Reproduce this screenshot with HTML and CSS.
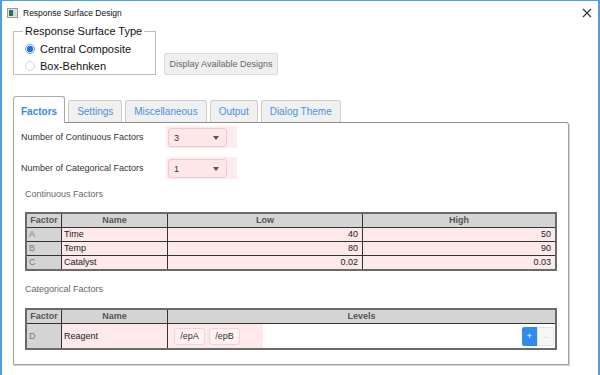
FILE: index.html
```html
<!DOCTYPE html>
<html lang="en">
<head>
    <meta charset="UTF-8">
    <meta name="viewport" content="width=device-width, initial-scale=1.0">
    <title>Response Surface Design</title>
    <link rel="stylesheet" href="styles.css">
</head>
<body>
<div class="window">
    <div class="titlebar">
        <svg class="app-icon" width="11" height="10" viewBox="0 0 11 10">
            <rect x="0.5" y="0.5" width="10" height="9" fill="#e4e4e4" stroke="#9a9a9a"/>
            <rect x="2" y="2" width="4" height="6" fill="#2f6f62"/>
            <rect x="6" y="2" width="3" height="6" fill="#c9dcd6"/>
        </svg>
        <span class="title">Response Surface Design</span>
        <svg class="close" width="10" height="10" viewBox="0 0 10 10">
            <path d="M1 1 L9 9 M9 1 L1 9" stroke="#333" stroke-width="1.1" fill="none"/>
        </svg>
    </div>

    <div class="content">
        <div class="top-row">
            <fieldset class="design-type">
                <legend>Response Surface Type</legend>
                <label class="radio checked"><span class="dot"></span>Central Composite</label>
                <label class="radio"><span class="dot"></span>Box-Behnken</label>
            </fieldset>
            <button class="plain-button">Display Available Designs</button>
        </div>

        <div class="tabs">
            <div class="tab active">Factors</div>
            <div class="tab">Settings</div>
            <div class="tab">Miscellaneous</div>
            <div class="tab">Output</div>
            <div class="tab">Dialog Theme</div>
        </div>

        <div class="panel">
            <div class="field-row">
                <span class="field-label">Number of Continuous Factors</span>
                <div class="highlight">
                    <div class="select"><span>3</span><span class="arrow"></span></div>
                </div>
            </div>
            <div class="field-row second">
                <span class="field-label">Number of Categorical Factors</span>
                <div class="highlight">
                    <div class="select"><span>1</span><span class="arrow"></span></div>
                </div>
            </div>

            <div class="section-title">Continuous Factors</div>
            <table class="grid">
                <tr>
                    <th class="col-factor">Factor</th>
                    <th class="col-name">Name</th>
                    <th class="col-low">Low</th>
                    <th>High</th>
                </tr>
                <tr>
                    <td class="factor">A</td>
                    <td class="name">Time</td>
                    <td class="num">40</td>
                    <td class="num">50</td>
                </tr>
                <tr>
                    <td class="factor">B</td>
                    <td class="name">Temp</td>
                    <td class="num">80</td>
                    <td class="num">90</td>
                </tr>
                <tr>
                    <td class="factor">C</td>
                    <td class="name">Catalyst</td>
                    <td class="num">0.02</td>
                    <td class="num">0.03</td>
                </tr>
            </table>

            <div class="section-title lower">Categorical Factors</div>
            <table class="grid categorical">
                <tr>
                    <th class="col-factor">Factor</th>
                    <th class="col-name">Name</th>
                    <th>Levels</th>
                </tr>
                <tr>
                    <td class="factor">D</td>
                    <td class="name">Reagent</td>
                    <td class="levels-cell">
                        <div class="levels">
                            <div class="level-list">
                                <span class="chip">/epA</span>
                                <span class="chip">/epB</span>
                            </div>
                            <div class="steppers">
                                <span class="step plus">+</span>
                                <span class="step minus">&minus;</span>
                            </div>
                        </div>
                    </td>
                </tr>
            </table>
        </div>
    </div>
</div>
</body>
</html>
```

FILE: styles.css
```css
body {
    margin: 0;
    font-family: "Liberation Sans", Arial, sans-serif;
    background-color: #fff;
    color: #222;
}
.window {
    box-sizing: border-box;
    width: 600px;
    height: 375px;
    border-top: 1px solid #4d9de0;
    border-left: 2px solid #4d9de0;
    border-right: 2px solid #4d9de0;
    overflow: hidden;
}
.titlebar {
    display: flex;
    align-items: center;
    height: 23px;
    padding: 0 6px 0 5px;
}
.title {
    margin-left: 5px;
    font-size: 8.5px;
    color: #111;
}
.close {
    margin-left: auto;
}
.content {
    padding-left: 11px;
}
.top-row {
    display: flex;
    align-items: flex-end;
    gap: 8px;
}
.design-type {
    box-sizing: border-box;
    width: 143px;
    margin: 0;
    padding: 2px 0 0 11px;
    border: 1px solid #bdbdbd;
}
.design-type legend {
    margin-left: -2px;
    padding: 0 2px;
    font-size: 11px;
    line-height: 14px;
    color: #111;
}
.radio {
    display: flex;
    align-items: center;
    height: 17px;
    font-size: 11px;
    color: #111;
}
.dot {
    box-sizing: border-box;
    width: 10px;
    height: 10px;
    margin-right: 5px;
    border: 1px solid #d6d6d6;
    border-radius: 50%;
    background-color: #fff;
}
.radio.checked .dot {
    border-color: #5a9be6;
    background: radial-gradient(circle, #1a73e8 0, #1a73e8 3px, #fff 3.5px);
}
.plain-button {
    box-sizing: border-box;
    height: 22px;
    width: 114px;
    padding: 0;
    font-family: inherit;
    font-size: 9px;
    color: #666;
    background-color: #efefef;
    border: 1px solid #dadada;
    border-radius: 2px;
}
.tabs {
    display: flex;
    align-items: flex-end;
    gap: 3px;
    margin-top: 21px;
}
.tab {
    box-sizing: border-box;
    height: 22px;
    padding: 0 8px;
    line-height: 21px;
    font-size: 10px;
    color: #4a90e2;
    background-color: #f0f0f0;
    border: 1px solid #cdcdcd;
    border-bottom: none;
    border-radius: 3px 3px 0 0;
}
.tab.active {
    position: relative;
    height: 27px;
    margin-bottom: -1px;
    padding: 4px 7px 0;
    font-weight: bold;
    color: #3b86dc;
    background-color: #fff;
    border-color: #a9a9a9;
}
.panel {
    box-sizing: border-box;
    width: 556px;
    height: 243px;
    padding: 3px 10px 0 7px;
    border: 1px solid #a3a3a3;
    border-top-color: #8c8c8c;
    border-radius: 0 3px 0 0;
    box-shadow: 1px 1px 0 #d2d2d2;
}
.field-row {
    display: flex;
    align-items: center;
    height: 22px;
}
.field-row.second {
    margin-top: 9px;
}
.field-label {
    width: 145px;
    font-size: 9px;
    color: #333;
}
.highlight {
    align-self: stretch;
    padding: 2px 10px 1px 2px;
    background-color: #fdebed;
}
.select {
    box-sizing: border-box;
    display: flex;
    align-items: center;
    width: 59px;
    height: 19px;
    padding: 0 7px 0 5px;
    font-size: 9px;
    color: #333;
    background-color: #fde7e9;
    border: 1px solid #e8ccd0;
    border-radius: 3px;
}
.arrow {
    margin-left: auto;
    border-left: 3.5px solid transparent;
    border-right: 3.5px solid transparent;
    border-top: 4px solid #555;
}
.section-title {
    margin-top: 9px;
    padding-left: 4px;
    font-size: 9px;
    line-height: 12px;
    color: #666;
}
.section-title.lower {
    margin-top: 12px;
}
.grid {
    box-sizing: border-box;
    width: 532px;
    margin: 12px 0 0 4px;
    table-layout: fixed;
    border-collapse: separate;
    border-spacing: 0;
    border: 2px solid #6a6a6a;
    font-size: 9px;
}
.grid.categorical {
    margin-top: 13px;
}
.grid th,
.grid td {
    box-sizing: border-box;
    padding: 0;
    line-height: 13px;
    border-right: 1px solid #333;
    border-bottom: 1px solid #333;
    white-space: nowrap;
    overflow: hidden;
}
.grid th:last-child,
.grid td:last-child {
    border-right: none;
}
.grid tr:last-child td {
    border-bottom: none;
}
.grid th {
    font-weight: bold;
    color: #555;
    background-color: #d4d4d4;
}
.col-factor {
    width: 35px;
}
.col-name {
    width: 106px;
}
.col-low {
    width: 195px;
}
.grid td {
    background-color: #fde9ea;
    color: #222;
}
.grid td.factor {
    padding-left: 2px;
    color: #7a7a7a;
    background-color: #d4d4d4;
}
.grid td.name {
    padding-left: 2px;
}
.grid td.num {
    padding-right: 4px;
    text-align: right;
}
.categorical td {
    line-height: 24px;
}
.grid td.levels-cell {
    background-color: #fff;
}
.levels {
    display: flex;
    align-items: center;
    height: 24px;
}
.level-list {
    display: flex;
    align-items: center;
    gap: 4px;
    align-self: stretch;
    width: 95px;
    padding-left: 6px;
    box-sizing: border-box;
    background-color: #fde9ea;
}
.chip {
    box-sizing: border-box;
    width: 31px;
    height: 17px;
    line-height: 15px;
    text-align: center;
    color: #333;
    background-color: #fdf1f2;
    border: 1px solid #ecd4d7;
    border-radius: 3px;
}
.steppers {
    display: flex;
    margin-left: auto;
    margin-right: 1px;
}
.step {
    box-sizing: border-box;
    height: 19px;
    line-height: 18px;
    text-align: center;
    font-size: 9px;
}
.plus {
    width: 15px;
    color: #fff;
    background-color: #2f8cef;
    border-radius: 2px 0 0 2px;
}
.minus {
    width: 17px;
    color: #cfcfcf;
    background-color: #f6f6f6;
    border: 1px solid #e4e4e4;
    border-radius: 0 2px 2px 0;
}
```
